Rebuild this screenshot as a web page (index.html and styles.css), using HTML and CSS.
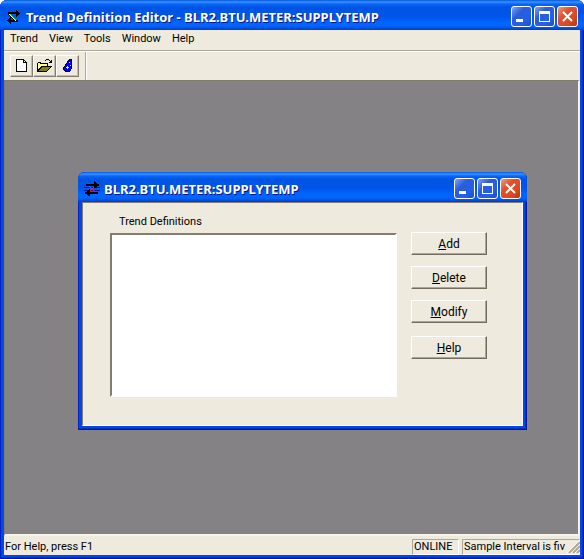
FILE: index.html
```html
<!DOCTYPE html>
<html lang="en">
<head>
<meta charset="utf-8">
<title>Trend Definition Editor</title>
<link rel="stylesheet" href="styles.css">
</head>
<body>
<div class="window main-window">
  <header class="titlebar">
    <svg class="app-icon" viewBox="0 0 16 16" aria-hidden="true">
      <path d="M2 3h8V1h1v1h1v1h1v1h1v1h-1v1h-1v1h-1v1h-1V5H2zM12 11v2H5v2H4v-1H3v-1H2v-1H1v-1h1v-1h1V9h1V8h1v3z"/>
      <path d="M2 4h2v1h1v1h1v1h1v1h1v1h1v1h1v1h1v1h1v1h-3v-1H8v-1H7v-1H6V9H5V8H4V7H3V6H2z"/>
      <path fill="#e8ffe8" d="M3 5h1v1h1v1h1v1h1v1h1v1h1v1h1v1H9v-1H8v-1H7V9H6V8H5V7H4V6H3z"/>
      <path fill="#30c850" d="M4 5h1v1h1v1h1v1h1v1h1v1h1v1H9v-1H8V9H7V8H6V7H5V6H4z"/>
    </svg>
    <h1 class="title">Trend Definition Editor - BLR2.BTU.METER:SUPPLYTEMP</h1>
    <div class="captions">
      <button class="caption" aria-label="Minimize"><svg viewBox="0 0 19 19"><path fill="#fff" d="M4 12h7v3H4z"/></svg></button>
      <button class="caption" aria-label="Maximize"><svg viewBox="0 0 19 19"><path fill="#fff" fill-rule="evenodd" d="M4 4h11v11H4zM5 7v7h9V7z"/></svg></button>
      <button class="caption close" aria-label="Close"><svg viewBox="0 0 19 19"><path class="cross" d="M5 5l9 9M14 5l-9 9"/></svg></button>
    </div>
  </header>
  <nav class="menubar">
    <button class="menu">Trend</button>
    <button class="menu">View</button>
    <button class="menu">Tools</button>
    <button class="menu">Window</button>
    <button class="menu">Help</button>
  </nav>
  <div class="toolbar">
    <button class="tool" aria-label="New"><svg viewBox="0 0 16 16"><path d="M2 1h8v1h1v1h1v1h1v10H2z"/><path fill="#fff" d="M3 2h6v3h3v8H3zM10 3h1v1h-1z"/></svg></button>
    <button class="tool" aria-label="Open"><svg viewBox="0 0 16 16"><path d="M9 1h3v1h1v1h1V2h1v3h-3V4h1V3h-1V2H9v1H8V2h1zM1 4h3v1h7v3h4v1h-1v1h-1v1h-1v1h-1v1h-1v1H0V5h1z"/><path fill="#ffff80" d="M1 5h2v1h7v2H4v1H3v1H2v1H1z"/><path fill="#848200" d="M5 9h8v1h-1v1h-1v1h-1v1H2v-1h1v-1h1v-1h1z"/></svg></button>
    <button class="tool" aria-label="Wizard"><svg viewBox="0 0 16 16"><path d="M9 1h3v10h-1v2h-1v1H5v-1H4v-1H3V9h1V8h1V6h1V5h1V3h1V2h1z"/><path fill="#0000f0" d="M9 2h2v9h-1v2H6v-1H4V9h1V8h1V6h1V5h1V3h1z"/><path fill="#ff0" d="M9 4h1v1H9zM7 8h1v1h1v1H8v1H7v-1H6V9h1zM10 7h1v1h-1z"/></svg></button>
    <span class="divider"></span>
  </div>
  <main class="workspace">
    <section class="window child-window">
      <header class="titlebar">
        <svg class="app-icon" viewBox="0 0 16 16" aria-hidden="true">
          <path stroke="#1010a0" d="M0 6.5h16M0 9.5h16"/>
          <path d="M2 3h9v2H2zM10 0h1v1h1v1h1v1h2v2h-2v1h-1v1h-2zM5 11h9v2H5zM6 8v7H4v-1H3v-1H1v-2h2v-1h1V9h1V8z"/>
          <path fill="#f02040" d="M3 1h1v1H3zM4 2h1v1H4zM5 5h1v1H5zM6 6h1v1H6zM7 7h1v1H7zM8 8h1v1H8zM9 9h1v1H9zM10 10h1v1h-1zM11 13h1v1h-1zM12 14h1v1h-1zM9 6h1v1H9zM6 9h1v1H6zM8 7h1v1H8zM7 8h1v1H7z"/>
        </svg>
        <h2 class="title">BLR2.BTU.METER:SUPPLYTEMP</h2>
        <div class="captions">
          <button class="caption" aria-label="Minimize"><svg viewBox="0 0 19 19"><path fill="#fff" d="M4 12h7v3H4z"/></svg></button>
          <button class="caption" aria-label="Maximize"><svg viewBox="0 0 19 19"><path fill="#fff" fill-rule="evenodd" d="M4 4h11v11H4zM5 7v7h9V7z"/></svg></button>
          <button class="caption close" aria-label="Close"><svg viewBox="0 0 19 19"><path class="cross" d="M5 5l9 9M14 5l-9 9"/></svg></button>
        </div>
      </header>
      <div class="dialog">
        <div class="definitions">
          <label class="list-label" for="definitions">Trend Definitions</label>
          <select class="list" id="definitions" size="10"></select>
        </div>
        <div class="actions">
          <button class="action"><u>A</u>dd</button>
          <button class="action"><u>D</u>elete</button>
          <button class="action"><u>M</u>odify</button>
          <button class="action action-help"><u>H</u>elp</button>
        </div>
      </div>
    </section>
  </main>
  <footer class="statusbar">
    <span class="message">For Help, press F1</span>
    <span class="pane pane-online">ONLINE</span>
    <span class="pane pane-sample">Sample Interval is fiv</span>
    <svg class="grip" viewBox="0 0 13 13" aria-hidden="true"><path stroke="#fff" d="M0 13L13 0M4 13l9-9M8 13l5-5"/><path stroke="#aca899" stroke-width="2" d="M2 13L13 2M6 13l7-7M10 13l3-3"/></svg>
  </footer>
</div>
</body>
</html>
```
FILE: styles.css
```css
* {
  box-sizing: border-box;
}

body {
  margin: 0;
  background: #fff;
  color: #000;
  font: 11px/14px Roboto, "Noto Sans", sans-serif;
}

button {
  margin: 0;
  padding: 0;
  border: 0;
  background: none;
  color: inherit;
  font: inherit;
}

svg {
  display: block;
  shape-rendering: crispEdges;
}

.window {
  display: flex;
  flex-direction: column;
  padding: 0 4px 4px;
  border-radius: 7px 7px 0 0;
  background: #0048e8;
  box-shadow: inset 1px 0 #0020c0, inset -1px -1px #001898, inset -2px -2px #0030c8;
}

.main-window {
  min-height: 100vh;
}

.titlebar {
  display: flex;
  align-items: center;
  gap: 4px;
  height: 30px;
  margin: 0 -4px;
  padding: 3px 6px 0;
  border-radius: 7px 7px 0 0;
  background: linear-gradient(#0058e0, #3c90ff 2px, #0868f8 4px, #0054e4 7px, #0054e8 16px, #0064ff 22px, #0064ff 26px, #0048d8 29px, #003cc0);
}

.app-icon {
  width: 16px;
  height: 16px;
}

.title {
  flex: 1;
  margin: 0;
  color: #fff;
  font: bold 13px/18px "Noto Sans", "Open Sans", sans-serif;
  text-shadow: 1px 1px #0a1883;
  white-space: nowrap;
}

.captions {
  display: flex;
  gap: 2px;
}

.caption {
  width: 21px;
  height: 21px;
  border: 1px solid #fff;
  border-radius: 3px;
  background: linear-gradient(135deg, #7ca4f8, #2c5cdc 35%, #2460e8 70%, #1c50c8);
}

.close {
  background: linear-gradient(135deg, #f09c80, #e05030 35%, #dc4820 70%, #b83410);
}

.cross {
  stroke: #fff;
  stroke-width: 2;
  shape-rendering: auto;
}

.menubar {
  display: flex;
  gap: 11px;
  height: 21px;
  padding: 0 6px 2px;
  border-bottom: 1px solid #aca899;
  background: #eeeadd;
}

.toolbar {
  display: flex;
  align-items: center;
  height: 29px;
  padding-left: 6px;
  border-top: 1px solid #fff;
  background: #eeeadd;
}

.tool {
  display: grid;
  place-items: center;
  width: 23px;
  height: 22px;
  border: 1px solid;
  border-color: #fff #847c70 #847c70 #fff;
  box-shadow: inset -1px -1px #c4bcac;
}

.tool svg {
  width: 16px;
  height: 16px;
}

.divider {
  align-self: stretch;
  width: 2px;
  margin-left: 6px;
  border-left: 1px solid #aca899;
  background: #fff;
}

.workspace {
  flex: 1;
  padding: 91px 51px 20px 73px;
  border: solid;
  border-width: 1px 2px 2px 1px;
  border-color: #807c70 #f8f4ec #f8f4ec #807c70;
  background: #848284;
}

.dialog {
  display: flex;
  gap: 14px;
  padding: 11px 35px 28px 27px;
  border: 1px solid;
  border-color: #847c70 #fff #fff #847c70;
  background: #eeeadd;
}

.definitions {
  display: flex;
  flex: 1;
  flex-direction: column;
  gap: 4px;
  padding-top: 1px;
}

.list-label {
  padding-left: 9px;
}

.list {
  width: 100%;
  height: 164px;
  border: 2px solid;
  border-color: #847c70 #fff #fff #847c70;
  border-radius: 0;
  background: #fff;
  font: inherit;
}

.actions {
  display: flex;
  flex-direction: column;
  gap: 11px;
  padding-top: 18px;
}

.action {
  width: 76px;
  height: 23px;
  border: 1px solid;
  border-color: #fff #746c60 #746c60 #fff;
  box-shadow: inset -1px -1px #aca498;
  font-size: 12px;
}

.action-help {
  margin-top: 2px;
}

.statusbar {
  display: flex;
  align-items: center;
  gap: 3px;
  height: 19px;
  padding-top: 2px;
  background: #eeeadd;
}

.message {
  flex: 1;
  padding-left: 1px;
}

.pane {
  height: 16px;
  padding-left: 1px;
  border: 1px solid;
  border-color: #aca899 #fff #fff #aca899;
  white-space: nowrap;
}

.pane-online {
  width: 47px;
}

.pane-sample {
  width: 118px;
}

.grip {
  width: 13px;
  height: 13px;
  margin-left: -16px;
  shape-rendering: auto;
}
```
